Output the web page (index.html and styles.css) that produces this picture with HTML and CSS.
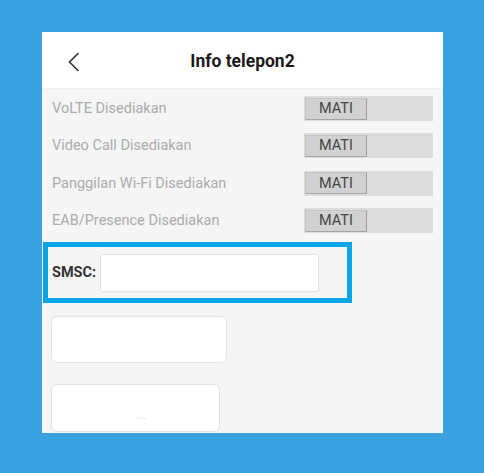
FILE: index.html
```html
<!DOCTYPE html>
<html>
<head>
<meta charset="utf-8">
<link rel="stylesheet" href="styles.css">
</head>
<body>
<div class="panel">
  <div class="header">
    <svg class="back" width="12" height="20" viewBox="0 0 12 20"><path d="M10.5 1 L1.5 10 L10.5 19" fill="none" stroke="#333" stroke-width="1.6"/></svg>
    <div class="title">Info telepon2</div>
  </div>
  <div class="list">
    <div class="row"><span class="label">VoLTE Disediakan</span><div class="toggle"><div class="thumb">MATI</div></div></div>
    <div class="row"><span class="label">Video Call Disediakan</span><div class="toggle"><div class="thumb">MATI</div></div></div>
    <div class="row"><span class="label">Panggilan Wi-Fi Disediakan</span><div class="toggle"><div class="thumb">MATI</div></div></div>
    <div class="row"><span class="label">EAB/Presence Disediakan</span><div class="toggle"><div class="thumb">MATI</div></div></div>
  </div>
  <div class="smsc">
    <span class="smsc-label">SMSC:</span>
    <div class="smsc-input"></div>
  </div>
  <div class="box box1"></div>
  <div class="box box2"><span class="mark"></span></div>
</div>
</body>
</html>
```
FILE: styles.css
```css
html, body {
  margin: 0;
  padding: 0;
  background: #3aa1e1;
  font-family: Roboto, "Noto Sans", sans-serif;
}
.panel {
  margin: 32px 0 0 42px;
  width: 401px;
  height: 401px;
  background: #f5f5f5;
  overflow: hidden;
}
.header {
  height: 57px;
  background: #fff;
  border-bottom: 1px solid #efefef;
  box-sizing: border-box;
  display: flex;
  align-items: center;
  justify-content: center;
  position: relative;
}
.back {
  position: absolute;
  left: 26px;
  top: 20px;
}
.title {
  font-size: 17.5px;
  font-weight: bold;
  color: #1a1a1a;
  margin-top: 2px;
}
.list {
  display: flex;
  flex-direction: column;
  gap: 12.4px;
  padding: 7px 10px 0 10px;
}
.row {
  height: 25px;
  display: flex;
  align-items: center;
  justify-content: space-between;
}
.label {
  font-size: 14.5px;
  color: #ababab;
}
.toggle {
  width: 129px;
  height: 25px;
  background: #dcdcdc;
  display: flex;
  align-items: center;
  padding: 1px;
  box-sizing: border-box;
}
.thumb {
  width: 62px;
  height: 22px;
  box-sizing: border-box;
  background: #d1d1d1;
  border: 1px solid #c4c4c4;
  border-right-color: #9f9f9f;
  border-bottom-color: #a6a6a6;
  font-size: 14.5px;
  color: #454545;
  display: flex;
  align-items: center;
  justify-content: center;
}
.smsc {
  margin: 9px 0 0 1px;
  width: 309px;
  height: 61px;
  box-sizing: border-box;
  border: 5px solid #0aa5e8;
  display: flex;
  align-items: center;
  padding-left: 4px;
}
.smsc-label {
  font-size: 14.5px;
  font-weight: bold;
  color: #333;
  width: 48px;
}
.smsc-input {
  width: 219px;
  height: 38px;
  box-sizing: border-box;
  background: #fff;
  border: 1px solid #e2e2e2;
  border-radius: 2px;
  margin-top: 1px;
}
.box {
  margin-left: 9px;
  background: #fff;
  border: 1px solid #e4e4e4;
  border-radius: 6px;
  box-sizing: border-box;
}
.box1 {
  margin-top: 13px;
  width: 176px;
  height: 47px;
}
.box2 {
  margin-top: 21px;
  width: 169px;
  height: 48px;
  display: flex;
  justify-content: center;
  align-items: flex-end;
}
.mark {
  width: 10px;
  height: 1px;
  background: #eeeeee;
  margin: 0 0 12px 12px;
}
```
